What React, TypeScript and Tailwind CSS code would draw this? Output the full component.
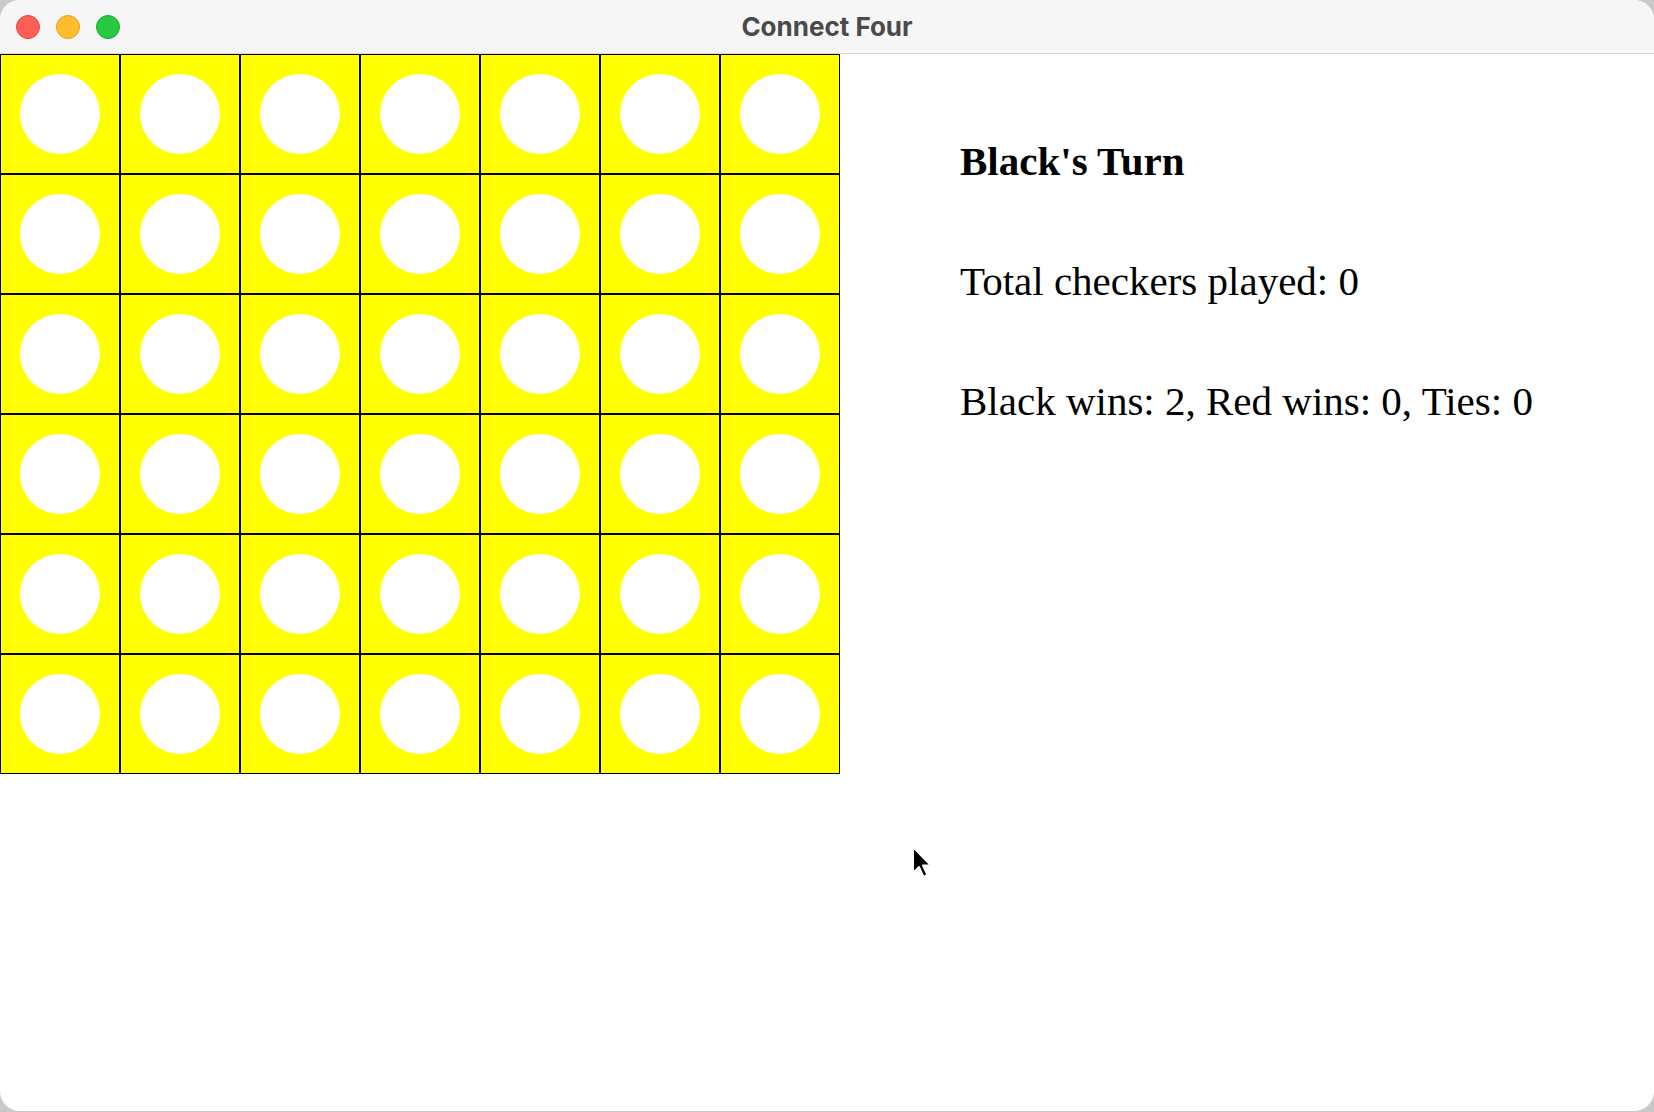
import React from 'react';

const ROWS = 6;
const COLS = 7;

function TrafficLights() {
    return (
        <div className="flex items-center gap-4 pl-4">
            <span className="w-6 h-6 rounded-full bg-[#ff5f57] border border-[#e2463f]" />
            <span className="w-6 h-6 rounded-full bg-[#febc2e] border border-[#e1a116]" />
            <span className="w-6 h-6 rounded-full bg-[#28c840] border border-[#1aab29]" />
        </div>
    );
}

function Cell() {
    return (
        <div className="w-[120px] h-[120px] border border-black bg-[#ffff00] flex items-center justify-center">
            <div className="w-20 h-20 rounded-full bg-white" />
        </div>
    );
}

function Board() {
    const cells = [];
    for (let r = 0; r < ROWS; r++) {
        for (let c = 0; c < COLS; c++) {
            cells.push(<Cell key={`${r}-${c}`} />);
        }
    }
    return (
        <div className="grid grid-cols-[repeat(7,120px)] auto-rows-[120px] w-[840px] self-start shrink-0">
            {cells}
        </div>
    );
}

function Cursor() {
    // mouse pointer left in the screenshot
    return (
        <svg className="absolute left-[911px] top-[845px]" width="24" height="36" viewBox="0 0 24 36">
            <path d="M2 2 L2 28 L8 22 L12.5 32 L16.5 30 L12 20.5 L20 20.5 Z" fill="black" stroke="white" strokeWidth="2" strokeLinejoin="round" />
        </svg>
    );
}

export default function App() {
    return (
        <div className="w-[1654px] h-[1112px] bg-[#c9c9c9]">
            <div className="relative w-full h-[1111px] bg-white rounded-t-[20px] rounded-b-[20px] overflow-hidden flex flex-col">
                <div className="h-[54px] shrink-0 bg-[#f6f6f6] border-b border-[#d9d9d9] flex items-center relative">
                    <TrafficLights />
                    <div
                        className="absolute inset-0 flex items-center justify-center text-[26px] font-bold text-[#4a4a4a]"
                        style={{ fontFamily: 'Inter, "Open Sans", sans-serif' }}
                    >
                        Connect Four
                    </div>
                </div>
                <div className="flex flex-1 items-start">
                    <Board />
                    <div
                        className="pl-[120px] pt-[47px] text-[41px] leading-[120px] text-black"
                        style={{ fontFamily: '"Liberation Serif", "Times New Roman", serif' }}
                    >
                        <p className="font-bold">Black's Turn</p>
                        <p>Total checkers played: 0</p>
                        <p>Black wins: 2, Red wins: 0, Ties: 0</p>
                    </div>
                </div>
                <Cursor />
            </div>
        </div>
    );
}
